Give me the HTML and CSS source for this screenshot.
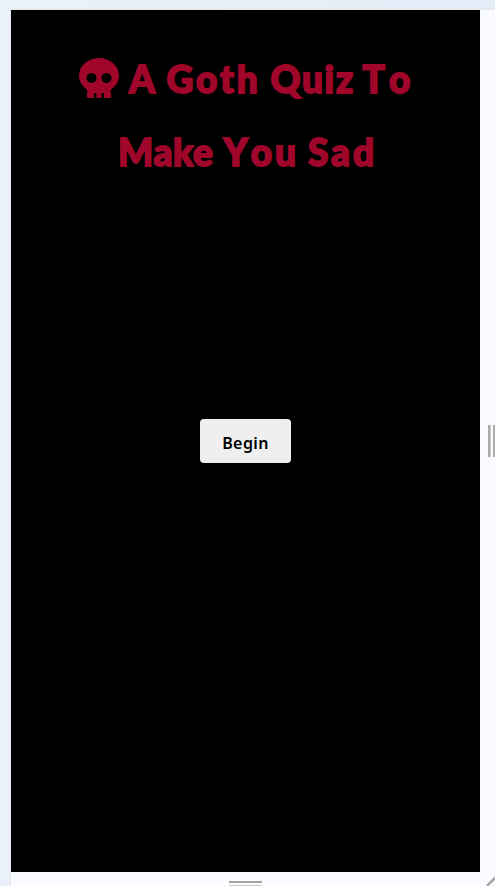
FILE: index.html
```html
<!DOCTYPE html>
<html lang="en">
<head>
<meta charset="utf-8">
<title>A Goth Quiz To Make You Sad</title>
<link rel="stylesheet" href="styles.css">
</head>
<body>
<div class="workspace">
  <main class="screen">
    <h1 class="title">
      <span class="line line-first"><svg class="skull" viewBox="0 0 512 512" aria-hidden="true"><path d="M256 0C114.600 0 0 100.300 0 224c0 70.100 36.900 132.600 94.500 173.700 9.700 6.900 15.200 18.100 13.500 29.900l-9.400 66.200c-1.400 9.600 6 18.200 15.700 18.200H192v-56c0-4.400 3.600-8 8-8h16c4.400 0 8 3.600 8 8v56h64v-56c0-4.400 3.600-8 8-8h16c4.400 0 8 3.600 8 8v56h77.700c9.700 0 17.100-8.600 15.700-18.200l-9.400-66.200c-1.700-11.700 3.800-23 13.500-29.900C475.100 356.600 512 294.100 512 224 512 100.300 397.400 0 256 0zm-96 320c-35.300 0-64-28.700-64-64s28.700-64 64-64 64 28.700 64 64-28.700 64-64 64zm192 0c-35.300 0-64-28.700-64-64s28.700-64 64-64 64 28.700 64 64-28.700 64-64 64z"/></svg><span class="text-first">A <span class="goth">Goth</span> <span class="quiz">Quiz</span> <span class="to">To</span></span></span>
      <span class="line line-second"><span><span class="make">Make</span> <span class="you">You</span> <span class="sad">Sad</span></span></span>
    </h1>
    <button class="begin" type="button">Begin</button>
  </main>
  <div class="handle-right"><i></i><i></i></div>
  <div class="handle-bottom"><i></i><i></i></div>
  <svg class="handle-corner" viewBox="0 0 15 14" aria-hidden="true"><path d="M7 14L16 5" stroke="#a5a5a5" stroke-width="2.500"/></svg>
</div>
</body>
</html>
```
FILE: styles.css
```css
* { box-sizing: border-box; }
html, body { height: 100%; }
body {
  margin: 0;
  overflow: hidden;
  background: linear-gradient(90deg, #ebf1fa, #e4ecf7);
  padding: 10px 0 0 11px;
}
.workspace {
  height: 876px;
  display: grid;
  grid-template-columns: 469px 15px;
  grid-template-rows: 862px 14px;
  background: #fafbff;
  box-shadow: 0 0 1px 1px #e5e7e9;
}
.screen {
  background: #000;
  display: flex;
  flex-direction: column;
  align-items: center;
}
.title {
  margin: 32px 0 0;
  width: 100%;
  color: #9f062a;
  font: 900 37px/73px Lato, sans-serif;
  -webkit-text-stroke: 1.8px #9f062a;
}
.line {
  display: flex;
  align-items: center;
  height: 73px;
  white-space: nowrap;
}
.line-first { padding-left: 68px; }
.line-second { padding-left: 107px; }
.text-first { margin-left: 10px; letter-spacing: 1px; }
.goth { letter-spacing: 2.9px; margin-left: 2px; }
.quiz { letter-spacing: 1.7px; }
.to { letter-spacing: 4px; margin-left: -2px; font-kerning: none; }
.make { letter-spacing: 0.7px; }
.you { letter-spacing: 3px; margin-left: 1px; font-kerning: none; }
.sad { letter-spacing: 3px; }
.skull {
  width: 40px;
  height: 40px;
  margin-top: -2px;
  fill: currentColor;
}
.begin {
  width: 91px;
  height: 44px;
  margin: 231px 0 0;
  padding: 4px 0 0;
  border: 0;
  border-radius: 4px;
  background: #efefef;
  color: #000;
  font: 600 16px/24px "Noto Sans", sans-serif;
  letter-spacing: 0.4px;
}
.handle-right {
  display: flex;
  align-self: center;
  gap: 2px;
  padding-left: 8px;
  overflow: hidden;
}
.handle-right i {
  flex: none;
  width: 3px;
  height: 32px;
  background: #aaa;
  border-right: 1px solid #ccc;
}
.handle-bottom {
  display: flex;
  flex-direction: column;
  align-items: center;
  gap: 2px;
  padding-top: 9px;
  overflow: hidden;
}
.handle-bottom i {
  flex: none;
  width: 33px;
  height: 2px;
  background: #a5a5a5;
}
.handle-bottom i + i { background: #ccc; }
.handle-corner { width: 15px; height: 14px; }
```
